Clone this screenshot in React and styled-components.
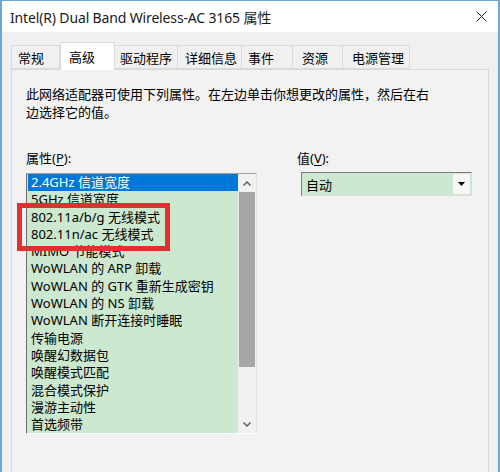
import React from "react";
import styled, { createGlobalStyle } from "styled-components";

const GlobalStyle = createGlobalStyle`
  html, body { margin: 0; padding: 0; background: #f0f0f0; }
  body { font-family: "Noto Sans", "Noto Sans CJK SC", sans-serif; }
`;

const FONT = `"Noto Sans", "Noto Sans CJK SC", sans-serif`;

const Window = styled.div`
  position: relative;
  width: 500px;
  height: 472px;
  box-sizing: border-box;
  border-left: 2px solid #6aa7d6;
  border-right: 2px solid #6aa7d6;
  border-top: 1px solid #6aa7d6;
  background: #f0f0f0;
  overflow: hidden;
  font-family: ${FONT};
  color: #000;
`;

const TitleBar = styled.div`
  height: 31px;
  background: #fff;
  display: flex;
  align-items: center;
  justify-content: space-between;
  padding: 0 11px 0 8px;
`;

const Title = styled.div`
  font-size: 14px;
  color: #1a1a1a;
  letter-spacing: -0.15px;
`;

const CloseBtn = styled.div`
  width: 12px;
  height: 12px;
  display: flex;
  align-items: center;
  justify-content: center;
`;

const Body = styled.div`
  padding: 10px 9px 0 9px;
`;

const TabStrip = styled.div`
  display: flex;
  align-items: flex-end;
  height: 27px;
  position: relative;
  z-index: 1;
`;

const Tab = styled.div`
  box-sizing: border-box;
  width: ${(p) => p.$w}px;
  padding-left: ${(p) => p.$pad}px;
  height: ${(p) => (p.$active ? 28 : 24)}px;
  margin-bottom: ${(p) => (p.$active ? -1 : 0)}px;
  display: flex;
  align-items: center;
  font-size: 13px;
  background: ${(p) => (p.$active ? "#ffffff" : "#f0f0f0")};
  border: 1px solid #dadada;
  border-bottom: ${(p) => (p.$active ? "none" : "1px solid #dadada")};
  border-left: ${(p) => (p.$first || p.$active ? "1px solid #dadada" : "none")};
  color: #000;
`;

const Panel = styled.div`
  border: 1px solid #d9d9d9;
  background: #f2f2f2;
  height: 420px;
  padding: 15px 0 0 14px;
  box-sizing: border-box;
`;

const Desc = styled.div`
  font-size: 13px;
  line-height: 18px;
  color: #000;
`;

const Columns = styled.div`
  display: flex;
  margin-top: 28px;
`;

const LeftCol = styled.div`
  width: 271px;
  display: flex;
  flex-direction: column;
`;

const RightCol = styled.div`
  display: flex;
  flex-direction: column;
`;

const Label = styled.div`
  font-size: 13px;
  line-height: 18px;
  margin-bottom: ${(p) => p.$mb}px;
  u { text-decoration: underline; text-underline-offset: 2px; }
`;

const ListBox = styled.div`
  width: 231px;
  height: 261px;
  box-sizing: border-box;
  border-top: 1px solid #a0a0a0;
  border-left: 1px solid #6d6d6d;
  border-right: 1px solid #e3e3e3;
  border-bottom: 1px solid #ffffff;
  display: flex;
  background: #cce8cf;
`;

const Items = styled.div`
  flex: 1;
  display: flex;
  flex-direction: column;
  padding-left: 1px;
`;

const Item = styled.div`
  height: 17.3px;
  line-height: 17.3px;
  font-size: 13px;
  padding-left: 3px;
  white-space: nowrap;
  background: ${(p) => (p.$sel ? "#0078d7" : "transparent")};
  color: ${(p) => (p.$sel ? "#ffffff" : "#000")};
`;

const ScrollBar = styled.div`
  width: 18px;
  background: #f0f0f0;
  display: flex;
  flex-direction: column;
`;

const ScrollArrow = styled.div`
  height: 18px;
  display: flex;
  align-items: center;
  justify-content: center;
`;

const Thumb = styled.div`
  height: 175px;
  margin: 0 1px;
  background: #a6a6a6;
`;

const Track = styled.div`
  flex: 1;
`;

const Combo = styled.div`
  margin-left: 4px;
  width: 171px;
  height: 24px;
  box-sizing: border-box;
  border-top: 1px solid #7a7a7a;
  border-left: 1px solid #7a7a7a;
  border-right: 1px solid #dcdcdc;
  border-bottom: 1px solid #dcdcdc;
  background: #cce8cf;
  display: flex;
  align-items: center;
`;

const ComboText = styled.div`
  flex: 1;
  font-size: 13px;
  padding-left: 4px;
`;

const ComboBtn = styled.div`
  width: 17px;
  height: 20px;
  margin-right: 1px;
  background: #f7f7f7;
  display: flex;
  align-items: center;
  justify-content: center;
`;

const Highlight = styled.div`
  position: absolute;
  left: 15px;
  top: 202px;
  width: 153px;
  height: 48px;
  box-sizing: border-box;
  border: 5px solid #e3302e;
  pointer-events: none;
`;

const tabs = [
  { t: "常规", w: 49, pad: 6 },
  { t: "高级", w: 55, pad: 8, active: true },
  { t: "驱动程序", w: 63, pad: 5 },
  { t: "详细信息", w: 64, pad: 7 },
  { t: "事件", w: 51, pad: 6 },
  { t: "资源", w: 50, pad: 9 },
  { t: "电源管理", w: 67, pad: 9 },
];

const items = [
  "2.4GHz 信道宽度",
  "5GHz 信道宽度",
  "802.11a/b/g 无线模式",
  "802.11n/ac 无线模式",
  "MIMO 节能模式",
  "WoWLAN 的 ARP 卸载",
  "WoWLAN 的 GTK 重新生成密钥",
  "WoWLAN 的 NS 卸载",
  "WoWLAN 断开连接时睡眠",
  "传输电源",
  "唤醒幻数据包",
  "唤醒模式匹配",
  "混合模式保护",
  "漫游主动性",
  "首选频带",
];

export default function App() {
  return (
    <Window>
      <GlobalStyle />
      <TitleBar>
        <Title>Intel(R) Dual Band Wireless-AC 3165 属性</Title>
        <CloseBtn>
          <svg width="11" height="11" viewBox="0 0 11 11">
            <path d="M0.5 0.5 L10.5 10.5 M10.5 0.5 L0.5 10.5" stroke="#222" strokeWidth="1" />
          </svg>
        </CloseBtn>
      </TitleBar>
      <Body>
        <TabStrip>
          {tabs.map((tb, i) => (
            <Tab key={tb.t} $w={tb.w} $pad={tb.pad} $active={tb.active} $first={i === 0}>
              {tb.t}
            </Tab>
          ))}
        </TabStrip>
        <Panel>
          <Desc>
            此网络适配器可使用下列属性。在左边单击你想更改的属性，然后在右
            <br />
            边选择它的值。
          </Desc>
          <Columns>
            <LeftCol>
              <Label $mb={6}>
                属性(<u>P</u>):
              </Label>
              <ListBox>
                <Items>
                  {items.map((it, i) => (
                    <Item key={it} $sel={i === 0}>
                      {it}
                    </Item>
                  ))}
                </Items>
                <ScrollBar>
                  <ScrollArrow>
                    <svg width="8" height="5" viewBox="0 0 8 5">
                      <path d="M0.5 4.5 L4 1 L7.5 4.5" stroke="#555" strokeWidth="1.3" fill="none" />
                    </svg>
                  </ScrollArrow>
                  <Thumb />
                  <Track />
                  <ScrollArrow>
                    <svg width="8" height="5" viewBox="0 0 8 5">
                      <path d="M0.5 0.5 L4 4 L7.5 0.5" stroke="#555" strokeWidth="1.3" fill="none" />
                    </svg>
                  </ScrollArrow>
                </ScrollBar>
              </ListBox>
            </LeftCol>
            <RightCol>
              <Label $mb={5}>
                值(<u>V</u>):
              </Label>
              <Combo>
                <ComboText>自动</ComboText>
                <ComboBtn>
                  <svg width="7" height="4" viewBox="0 0 7 4">
                    <path d="M0 0 L7 0 L3.5 4 Z" fill="#000" />
                  </svg>
                </ComboBtn>
              </Combo>
            </RightCol>
          </Columns>
        </Panel>
      </Body>
      <Highlight />
    </Window>
  );
}
